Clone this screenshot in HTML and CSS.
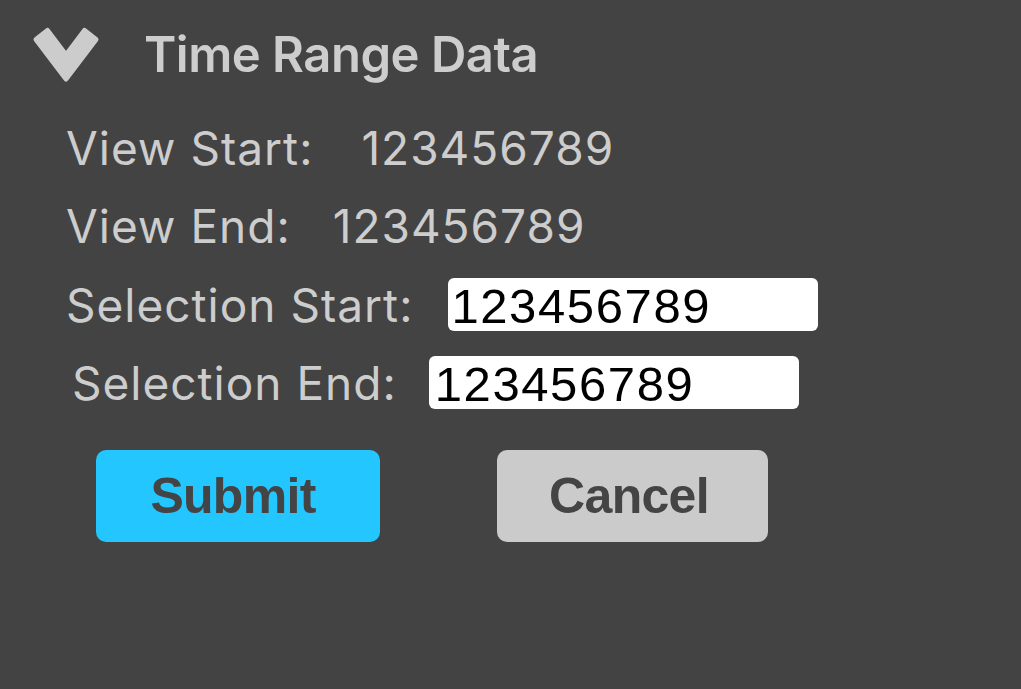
FILE: index.html
```html
<!DOCTYPE html>
<html>
<head>
<meta charset="utf-8">
<link rel="stylesheet" href="styles.css">
</head>
<body>
<div class="panel">
  <div class="header">
    <svg class="chev" width="72" height="62" viewBox="0 0 72 62"><polygon points="6,15.5 17.5,6.5 36,31 54.5,6.5 66,15.5 36,55" fill="#cccccc" stroke="#cccccc" stroke-width="5" stroke-linejoin="round"/></svg>
    <span class="title">Time Range Data</span>
  </div>
  <div class="row row-view1"><span class="label">View Start:</span><span class="value">123456789</span></div>
  <div class="row row-view2"><span class="label">View End:</span><span class="value">123456789</span></div>
  <div class="row row-sel1"><span class="label sel">Selection Start:</span><input class="field" type="text" value="123456789"></div>
  <div class="row row-sel2"><span class="label sel">Selection End:</span><input class="field field-b" type="text" value="123456789"></div>
  <div class="buttons">
    <button class="btn submit">Submit</button>
    <button class="btn cancel">Cancel</button>
  </div>
</div>
</body>
</html>
```
FILE: styles.css
```css
html, body {
  margin: 0;
  padding: 0;
  background: #434343;
  width: 1021px;
  height: 689px;
  overflow: hidden;
}
.panel {
  display: flex;
  flex-direction: column;
  font-family: "Inter", "Liberation Sans", sans-serif;
  color: #cdcdcd;
}
.header {
  display: flex;
  align-items: flex-start;
  gap: 42px;
  padding: 24px 0 0 30px;
  height: 62px;
}
.chev { display: block; }
.title {
  font-size: 49px;
  font-weight: 600;
  line-height: 62px;
  letter-spacing: -0.5px;
}
.row {
  display: flex;
  align-items: flex-start;
  padding-left: 66px;
}
.label, .value {
  font-size: 46px;
  font-weight: 400;
  line-height: 46px;
  letter-spacing: 1px;
  white-space: nowrap;
}
.row-view1 { margin-top: 39px; gap: 48px; }
.row-view2 { margin-top: 32px; gap: 42px; }
.row-sel1 { margin-top: 29px; gap: 35px; }
.row-sel2 { margin-top: 25px; gap: 32px; padding-left: 72px; }
.label.sel { margin-top: 4px; }
.field {
  box-sizing: border-box;
  width: 370px;
  height: 53px;
  border: none;
  border-radius: 6px;
  background: #ffffff;
  color: #000000;
  font-family: "Liberation Sans", Arial, sans-serif;
  font-size: 49px;
  letter-spacing: 1.6px;
  padding: 3px 0 0 3px;
  margin: 0;
  outline: none;
}
.field-b { padding-left: 6px; }
.buttons {
  display: flex;
  gap: 117px;
  padding-left: 96px;
  margin-top: 41px;
}
.btn {
  height: 92px;
  border: none;
  border-radius: 10px;
  font-family: "Liberation Sans", Arial, sans-serif;
  font-weight: 700;
  font-size: 50px;
  letter-spacing: -0.7px;
  color: #444444;
  padding: 0;
  margin: 0;
}
.submit { width: 284px; background: #23c6fe; padding-right: 10px; }
.cancel { width: 271px; background: #cbcbcb; padding-right: 7px; }
```
